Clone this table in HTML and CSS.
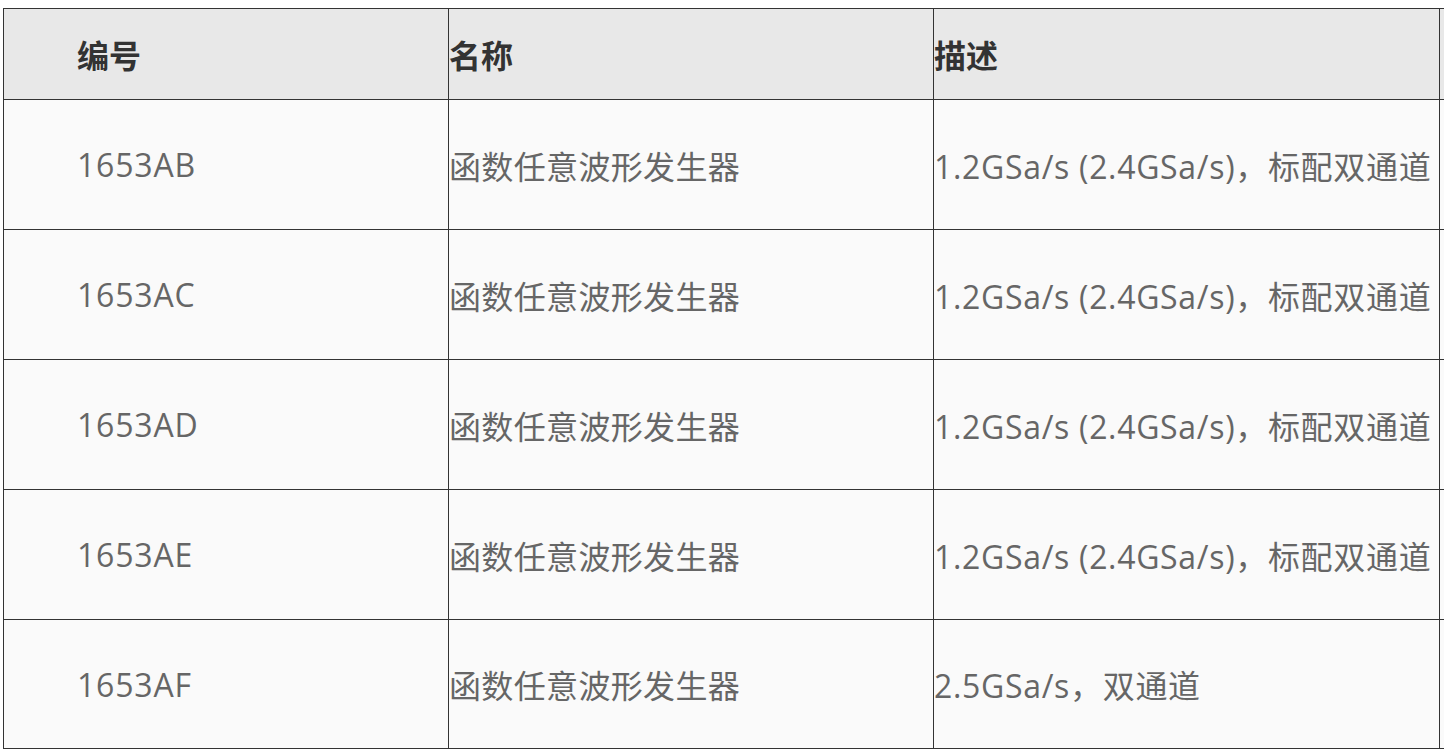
FILE: index.html
```html
<!DOCTYPE html>
<html lang="zh-CN">
<head>
<meta charset="utf-8">
<title>产品列表</title>
<link rel="stylesheet" href="styles.css">
</head>
<body>
<div class="wrap">
<table class="spec">
  <colgroup>
    <col class="c1">
    <col class="c2">
    <col class="c3">
    <col class="c4">
  </colgroup>
  <thead>
    <tr>
      <th class="first">编号</th>
      <th>名称</th>
      <th>描述</th>
      <th></th>
    </tr>
  </thead>
  <tbody>
    <tr><td class="first">1653AB</td><td class="name">函数任意波形发生器</td><td class="desc">1.2GSa/s (2.4GSa/s)，标配双通道</td><td></td></tr>
    <tr><td class="first">1653AC</td><td class="name">函数任意波形发生器</td><td class="desc">1.2GSa/s (2.4GSa/s)，标配双通道</td><td></td></tr>
    <tr><td class="first">1653AD</td><td class="name">函数任意波形发生器</td><td class="desc">1.2GSa/s (2.4GSa/s)，标配双通道</td><td></td></tr>
    <tr><td class="first">1653AE</td><td class="name">函数任意波形发生器</td><td class="desc">1.2GSa/s (2.4GSa/s)，标配双通道</td><td></td></tr>
    <tr class="last"><td class="first">1653AF</td><td class="name">函数任意波形发生器</td><td class="desc">2.5GSa/s，双通道</td><td></td></tr>
  </tbody>
</table>
</div>
</body>
</html>
```

FILE: styles.css
```css
html, body {
  margin: 0;
  padding: 0;
  background: #ffffff;
  overflow: hidden;
}
.wrap {
  padding: 8px 0 0 3px;
  width: 1800px;
}
.spec {
  border-collapse: collapse;
  table-layout: fixed;
  width: 1737px;
  font-family: "Open Sans", "Noto Sans CJK SC", sans-serif;
  font-size: 32px;
}
.c1 { width: 445px; }
.c2 { width: 485px; }
.c3 { width: 506px; }
.c4 { width: 300px; }
.spec th, .spec td {
  border: 1px solid #333333;
  padding: 0;
  text-align: left;
  vertical-align: middle;
  white-space: nowrap;
  overflow: hidden;
}
.spec thead tr { height: 91px; }
.spec tbody tr { height: 130px; }
.spec tbody tr.last { height: 129px; }
.spec th {
  background: #e8e8e8;
  color: #333333;
  font-weight: 700;
}
.spec td {
  background: #fafafa;
  color: #666666;
  font-weight: 400;
}
.spec .first {
  padding-left: 73px;
}
.spec td.first { letter-spacing: 0.8px; }
.spec td.name { letter-spacing: 0.35px; }
.spec td.desc { letter-spacing: 0.68px; }
```
